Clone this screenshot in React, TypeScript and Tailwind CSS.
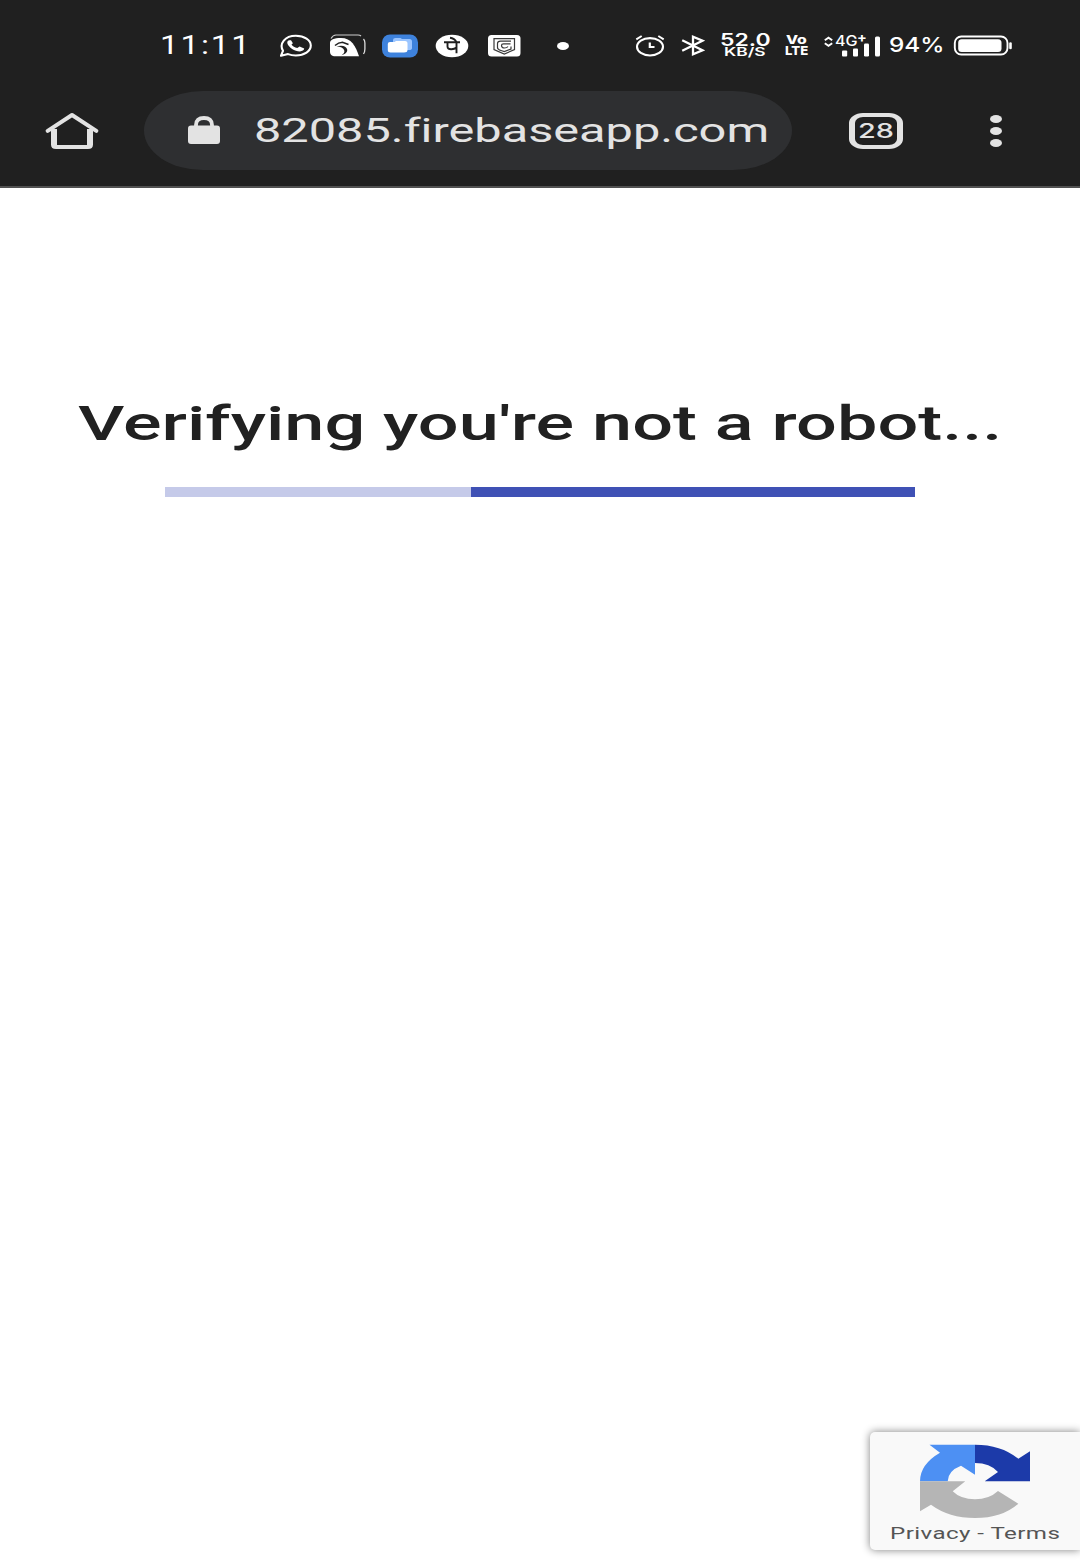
import { useLayoutEffect, useRef, useState } from "react";

/** A single line of text stretched horizontally to fill its box. */
function WideText({ text, className }: { text: string; className: string }) {
  const box = useRef<HTMLDivElement>(null);
  const line = useRef<HTMLSpanElement>(null);
  const [scale, setScale] = useState(1.5);

  useLayoutEffect(() => {
    if (box.current && line.current) {
      setScale(box.current.clientWidth / line.current.offsetWidth);
    }
  }, [text]);

  return (
    <div ref={box} className={`shrink-0 ${className}`}>
      <span
        ref={line}
        className="inline-block origin-left whitespace-nowrap align-top"
        style={{ transform: `scaleX(${scale})` }}
      >
        {text}
      </span>
    </div>
  );
}

function WhatsAppIcon() {
  return (
    <svg className="ml-[27px] h-6 w-[34px] shrink-0" viewBox="0 0 34 24" fill="none">
      <path d="M2 21.7 4 16.8C-.2 9.7 6 1.8 16.8 1.8c8.6 0 15 4.2 15 9.8s-6.400 9.900-15 9.900c-3 0-5.500-.5-7.700-1.400Z" stroke="#fff" strokeWidth="2.100" strokeLinejoin="round" />
      <path d="M10.600 6.300c-1.800.2-2.700 1.500-2.200 3.100 1.200 3.800 7.300 8 12.500 8 2.300 0 4.200-1 4.300-2.800l-4.600-2.200-2.300 1.600c-2.500-.7-4.700-2-5.800-3.600l1.400-1.200-1.900-2.900Z" fill="#fff" />
    </svg>
  );
}

function WaveIcon() {
  return (
    <svg className="ml-[16px] h-6 w-[38px] shrink-0" viewBox="0 0 38 24" fill="none">
      <path d="M2 4.500Q4 1 7 1h22q2 0 3 1" stroke="#ccc" strokeWidth="1.200" />
      <path d="M34.500 5c1 1 1.400 2 1.400 4v6c0 2-.4 3.500-1.400 5" stroke="#ddd" strokeWidth="1.300" />
      <path d="M1 9C1 5.500 5 4 12 4c10.500 0 14.500 8 18 18.300H6.500c-4 0-5.500-1.500-5.500-5Z" fill="#fff" />
      <path d="M6 11.500Q9.500 8.300 13.500 8.200l6 2.300" stroke="#202020" strokeWidth="1.500" />
      <path d="M7.500 12.600c5-2 10-.6 10.700 3 .4 2.800-2 4.600-5.700 5.600 2.400-1.600 3.300-3 2.700-5-.7-2.200-3.700-3.400-7.700-3.600Z" fill="#202020" />
    </svg>
  );
}

function FoldersIcon() {
  return (
    <svg className="ml-[14px] h-6 w-[38px] shrink-0" viewBox="0 0 38 24">
      <rect x="1" y=".5" width="36" height="23" rx="8" fill="#3e82dc" />
      <path d="M14.500 4h5l1.500 1h7.500q2.500 0 2.500 2.500V14q0 2-3 2H12V6q0-2 2.500-2Z" fill="#9bc5ff" />
      <path d="M9 8h4.500L15 7h9q2.500 0 2.500 2.500V16q0 2.500-3.500 2.500H9.500Q6.800 18.500 6.800 16v-6Q6.800 8 9 8Z" fill="#fff" />
    </svg>
  );
}

function PayIcon() {
  return (
    <svg className="ml-4 h-6 w-[34px] shrink-0" viewBox="0 0 34 24">
      <ellipse cx="17" cy="12" rx="16.300" ry="11.200" fill="#fff" />
      <g fill="none" stroke="#202020" strokeWidth="1.900">
        <path d="M9 8.200h16M21.500 8.200v11M12.500 8.400v4.200q0 2.800 4 2.600 3-.2 5-1.600M15 3.800q4.500.5 6.500 4.400" />
      </g>
    </svg>
  );
}

function ShieldIcon() {
  return (
    <svg className="ml-[18px] h-6 w-[34px] shrink-0" viewBox="0 0 34 24">
      <rect x="1" y="1" width="32.500" height="21.500" rx="3.500" fill="#fff" />
      <g fill="none" stroke="#3a3a3a" strokeWidth="1.200">
        <path d="M7 4.600h20.500v11L17.300 20 7 15.600Z" />
        <path d="M24 7.200H13.500Q10.500 7.200 10.500 9.500v4q0 2 3.500 3l3.300 1 6.700-2.500v-2.500M23.500 9.900H16.500q-2 0-2 1.300 0 2.800 3 2.800 2.500 0 3.500-1.500" />
      </g>
    </svg>
  );
}

function AlarmIcon() {
  return (
    <svg className="ml-[66px] h-6 w-[30px] shrink-0" viewBox="0 0 30 24" fill="none" stroke="#fff">
      <ellipse cx="15" cy="12.800" rx="13" ry="8.700" strokeWidth="2.100" />
      <path d="M1.300 5.300 6.700 2M28.700 5.300 23.300 2" strokeWidth="2" />
      <path d="M14.800 8.500v4.500h4.700" strokeWidth="2.200" />
    </svg>
  );
}

function BluetoothIcon() {
  return (
    <svg className="ml-[16px] h-6 w-6 shrink-0" viewBox="0 0 24 24" fill="none" stroke="#fff">
      <path d="M1.200 6.200 21.500 16.300 12 20.300V2.700l9.500 4L1.200 16.800" strokeWidth="2.300" />
    </svg>
  );
}

function SignalIcon() {
  return (
    <div className="relative ml-[15px] h-[26px] w-[57px] shrink-0">
      <svg className="h-[26px] w-[57px]" viewBox="0 0 57 26">
        <path d="m1.800 7.200 3.700-2.600 3.700 2.600M1.800 10.200l3.700 2.600 3.700-2.600" fill="none" stroke="#fff" strokeWidth="1.900" />
        <rect x="19" y="17.500" width="5.200" height="6" rx="1" fill="#fff" />
        <rect x="30" y="15.500" width="5" height="8" rx="1" fill="#fff" />
        <rect x="41" y="10.500" width="5" height="13" rx="1.300" fill="#fff" />
        <rect x="52" y="3.500" width="5" height="20" rx="1.500" fill="#fff" />
      </svg>
      <WideText text="4G" className="absolute left-[12px] top-0 w-[23px] text-[14px] font-medium leading-[15px]" />
      <WideText text="+" className="absolute left-[34px] top-[-3px] w-[10px] text-[13px] font-bold leading-[15px]" />
    </div>
  );
}

function BatteryIcon() {
  return (
    <svg className="ml-[8px] h-6 w-[60px] shrink-0" viewBox="0 0 60 24">
      <rect x="1.800" y="2.500" width="52.700" height="18" rx="6.500" fill="none" stroke="#fff" strokeWidth="1.900" />
      <rect x="5.200" y="5.200" width="43.300" height="12.800" rx="3.500" fill="#fff" />
      <rect x="56.200" y="8.200" width="2.600" height="7" rx="1.300" fill="#fff" />
    </svg>
  );
}

function StatusBar() {
  return (
    <div className="flex h-[91px] items-center pl-[160px] text-white">
      <WideText text="11:11" className="w-[92px] font-['Roboto',sans-serif] text-[25px] leading-[25px] tracking-[1.5px]" />
      <WhatsAppIcon />
      <WaveIcon />
      <FoldersIcon />
      <PayIcon />
      <ShieldIcon />
      <div className="ml-[36px] h-[8px] w-3 shrink-0 rounded-[50%] bg-white" />
      <AlarmIcon />
      <BluetoothIcon />
      <div className="ml-[15px] flex w-[50px] shrink-0 flex-col items-center pt-px">
        <WideText text="52.0" className="w-[50px] text-[17px] font-semibold leading-[12px]" />
        <WideText text="KB/S" className="w-[42px] text-[12px] font-semibold leading-[12px]" />
      </div>
      <div className="ml-[14px] flex w-6 shrink-0 flex-col items-center">
        <WideText text="Vo" className="w-[21px] text-[12px] font-extrabold leading-[10px]" />
        <WideText text="LTE" className="w-[23px] text-[12px] font-extrabold leading-[11px]" />
      </div>
      <SignalIcon />
      <WideText text="94%" className="ml-[9px] w-[56px] pb-px text-[20px] font-medium leading-[24px]" />
      <BatteryIcon />
    </div>
  );
}

function AddressBar() {
  return (
    <div className="flex h-[79px] items-center pl-[45px]">
      <svg className="h-[38px] w-[54px] shrink-0" viewBox="0 0 54 38" fill="none">
        <path d="M2.700 18.900 27 3l24.300 15.900" stroke="#e3e3e3" strokeWidth="4" strokeLinecap="round" strokeLinejoin="round" />
        <path d="M6 17h6v16h30V17h6v15.500q0 4.500-5 4.500H11q-5 0-5-4.500Z" fill="#e3e3e3" />
      </svg>
      <div className="ml-[45px] flex h-[79px] w-[648px] shrink-0 items-center rounded-[59px/39.500px] bg-[#2e2f31] pl-[44px]">
        <svg className="mb-[2px] h-7 w-8 shrink-0" viewBox="0 0 32 28">
          <path d="M8 11V9q0-7 8-7t8 7v2" fill="none" stroke="#e3e3e3" strokeWidth="3.800" />
          <rect y="9.500" width="32" height="18.500" rx="3" fill="#e3e3e3" />
        </svg>
        <WideText
          text="82085.firebaseapp.com"
          className="ml-[34px] w-[515px] pt-px font-['Roboto',sans-serif] text-[33px] leading-[40px] text-[#e3e3e3] [font-variant-ligatures:none]"
        />
      </div>
      <div className="ml-[57px] flex h-9 w-[54px] shrink-0 items-center justify-center rounded-[14px/10px] border-x-[6px] border-y-4 border-[#e3e3e3]">
        <WideText text="28" className="w-[36px] text-[20px] font-medium leading-[20px] text-[#e3e3e3]" />
      </div>
      <div className="ml-[87px] flex shrink-0 flex-col gap-[4px]">
        <div className="h-2 w-3 rounded-[50%] bg-[#e3e3e3]" />
        <div className="h-2 w-3 rounded-[50%] bg-[#e3e3e3]" />
        <div className="h-2 w-3 rounded-[50%] bg-[#e3e3e3]" />
      </div>
    </div>
  );
}

function RecaptchaLogo() {
  return (
    <svg className="h-[75px] w-[112px]" viewBox="919 1444 112 75">
      <path d="M929.500 1444.700H975v30l-14-8.900q-13 5-13.300 15.500H920q0-17 20-28.600Z" fill="#4d90f3" />
      <path d="M975 1444.700q26 0 43.300 14l11.700-7.400v30h-45.300l13.300-9.300q-8-9-23-9Z" fill="#1c3aa9" />
      <path d="M920 1481.300h45.300l-12.600 10q8 8 22.300 8 14 0 23-8.300l20.300 12.700q-16.300 14.300-43.300 14.300-26 0-44-13.300l-11 6.600Z" fill="#b5b5b5" />
    </svg>
  );
}

export default function App() {
  return (
    <div className="flex h-[1562px] w-[1080px] flex-col overflow-hidden bg-white font-['Inter',sans-serif]">
      <header className="h-[188px] shrink-0 border-b-2 border-[#515151] bg-[#202020]">
        <StatusBar />
        <AddressBar />
      </header>
      <main className="flex flex-1 flex-col items-center">
        <h1 className="mt-[208px]">
          <WideText
            text="Verifying you're not a robot..."
            className="w-[924px] font-['Roboto',sans-serif] text-[48px] font-medium leading-[56px] text-[#212121]"
          />
        </h1>
        <div className="mt-[35px] flex h-[10px] w-[750px] bg-[#c5cae9]">
          <div className="ml-auto h-full w-[444px] bg-[#3f51b5]" />
        </div>
        <aside className="mb-[12px] mt-auto flex h-[118px] w-[210px] flex-col items-center self-end rounded-l-[5px] bg-[#f9f9f9] pt-[12px] shadow-[0_0_8px_#808080]">
          <RecaptchaLogo />
          <WideText
            text="Privacy - Terms"
            className="mt-[5px] w-[170px] font-['Roboto',sans-serif] text-[16px] leading-[20px] tracking-[0.3px] text-[#555]"
          />
        </aside>
      </main>
    </div>
  );
}
